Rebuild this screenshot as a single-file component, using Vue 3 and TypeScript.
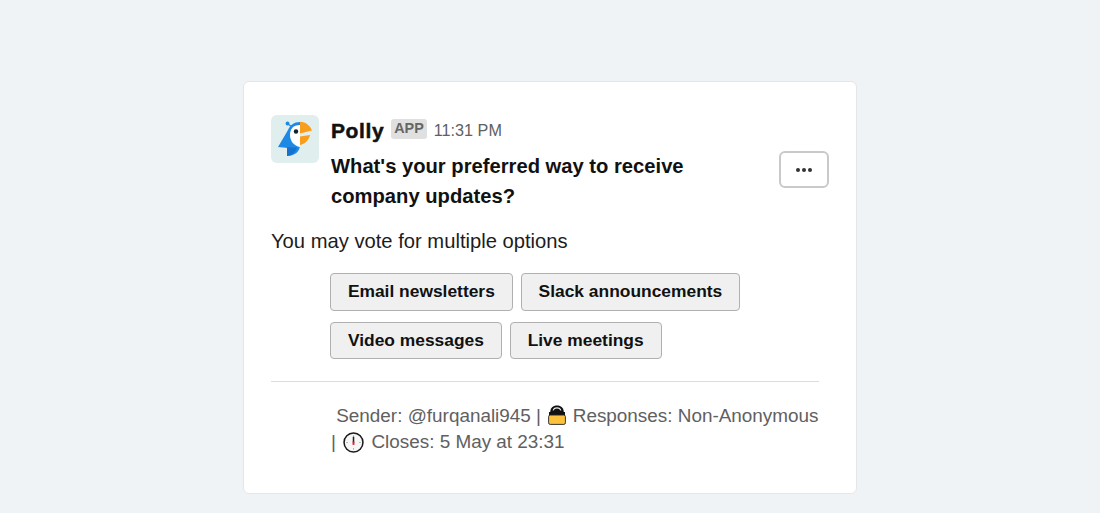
<script setup lang="ts">
const row1 = ['Email newsletters', 'Slack announcements']
const row2 = ['Video messages', 'Live meetings']
</script>

<template>
  <main class="page">
    <section class="card">
      <div class="message">
        <svg class="avatar" viewBox="0 0 48 48" aria-hidden="true">
          <rect width="48" height="48" rx="6" fill="#e1eeee" />
          <circle cx="16.5" cy="8.5" r="1.9" fill="#1e88e5" />
          <path d="M17 9 L21 12" stroke="#1e88e5" stroke-width="1.2" />
          <path d="M29 7 C23 7 19 10 17 15 L7 32 L16 32 L16 41 C23 41 29 37 29 30 Z" fill="#1e88e5" />
          <path d="M7 32 L26 32.5 C24 38 20 41 16 41 L16 33 Z" fill="#1672cc" />
          <path d="M29 10 C22 10 19 14 19 20 C19 26 23 31 29 32 Z" fill="#fff" />
          <circle cx="25" cy="16.5" r="2.2" fill="#10222e" />
          <path d="M29 6.7 C35 7 39 10.5 41 15.5 L29 18.5 Z" fill="#f99d1c" />
          <path d="M29 21.5 L39 20 C38 25 34 29 29 30 Z" fill="#f99d1c" />
        </svg>
        <div class="body">
          <div class="meta">
            <span class="name">Polly</span>
            <span class="badge">APP</span>
            <span class="time">11:31 PM</span>
          </div>
          <div class="question-row">
            <h1 class="question">What's your preferred way to receive company updates?</h1>
            <button class="more" type="button" aria-label="More options">
              <i></i><i></i><i></i>
            </button>
          </div>
        </div>
      </div>
      <p class="hint">You may vote for multiple options</p>
      <div class="options">
        <div class="option-row">
          <button v-for="o in row1" :key="o" class="option" type="button">{{ o }}</button>
        </div>
        <div class="option-row">
          <button v-for="o in row2" :key="o" class="option" type="button">{{ o }}</button>
        </div>
      </div>
      <hr class="rule" />
      <p class="footer">
        &nbsp;Sender: @furqanali945 |
        <svg class="icon lock" viewBox="0 0 18 20" aria-hidden="true">
          <path d="M2.2 11 V7.5 C2.2 2.8 5 .4 9 .4 C13 .4 15.8 2.8 15.8 7.5 V11 Z" fill="#111" />
          <path d="M4.6 5.6 C5 3.4 6.6 2.2 9 2.2 C11.4 2.2 13 3.4 13.4 5.6 L12.4 5.6 C11.8 4.2 10.6 3.5 9 3.5 C7.4 3.5 6.2 4.2 5.6 5.6 Z" fill="#e8e8e8" />
          <rect x="1" y="7" width="16" height="4" fill="#111" />
          <rect x=".6" y="10" width="16.8" height="9.4" rx="1.6" fill="#fcc13d" stroke="#222" stroke-width=".9" />
        </svg>
        <span class="keep">Responses: Non-Anonymous</span>
        |
        <svg class="icon clock" viewBox="0 0 22 22" aria-hidden="true">
          <circle cx="11" cy="11" r="9.9" fill="#f7f7f7" stroke="#1a1a1a" stroke-width="1.6" />
          <path d="M11 3.5 V5 M11 17 V18.5 M3.5 11 H5 M17 11 H18.5" stroke="#888" stroke-width=".8" />
          <path d="M11 11 V5" stroke="#222" stroke-width="1.6" />
          <path d="M11 10 V13.5" stroke="#e0202a" stroke-width="2" />
        </svg>
        Closes: 5 May at 23:31
      </p>
    </section>
  </main>
</template>

<style>
body {
  background: #eff3f6;
}
</style>

<style scoped>
.page {
  min-height: 513px;
  box-sizing: border-box;
  padding-top: 81px;
  display: flex;
  justify-content: center;
  align-items: flex-start;
  font-family: "Liberation Sans", Arial, sans-serif;
  color: #1d1c1d;
}
.card {
  width: 614px;
  height: 413px;
  box-sizing: border-box;
  background: #fff;
  border: 1px solid #e3e7ea;
  border-radius: 6px;
  padding: 33px 27px 0 27px;
}
.message {
  display: flex;
  gap: 12px;
}
.avatar {
  width: 48px;
  height: 48px;
  flex: none;
}
.body {
  flex: 1;
  min-width: 0;
}
.meta {
  display: flex;
  align-items: center;
  height: 30px;
}
.name {
  font-size: 21px;
  font-weight: 700;
  letter-spacing: 0.6px;
  color: #111;
  -webkit-text-stroke: 0.5px #111;
  position: relative;
  top: 1px;
}
.badge {
  margin-left: 7px;
  height: 20px;
  line-height: 18px;
  padding: 0 3px;
  background: #e0e0e0;
  color: #666;
  border-radius: 3px;
  font-size: 14.4px;
  font-weight: 700;
  margin-top: -3px;
}
.time {
  margin-left: 7px;
  font-size: 16.2px;
  color: #616061;
}
.question-row {
  display: flex;
  align-items: flex-start;
  justify-content: space-between;
  margin-top: 6px;
}
.question {
  margin: 0;
  width: 400px;
  font-size: 20.2px;
  line-height: 30px;
  font-weight: 700;
  color: #111;
}
.more {
  width: 50px;
  height: 37px;
  background: #fff;
  border: 2px solid #c9c9c9;
  border-radius: 6px;
  display: flex;
  gap: 2px;
  align-items: center;
  justify-content: center;
  padding: 0;
}
.more i {
  width: 4px;
  height: 4px;
  border-radius: 50%;
  background: #333;
}
.hint {
  margin: 15px 0 0;
  font-size: 20.2px;
  line-height: 30px;
  color: #1d1c1d;
}
.options {
  margin: 17px 0 0 59px;
  display: flex;
  flex-direction: column;
  gap: 11px;
}
.option-row {
  display: flex;
  gap: 8px;
}
.option {
  height: 37.5px;
  padding: 0 16.9px;
  background: #f0f0f0;
  border: 1px solid #b0b0b0;
  border-radius: 4px;
  font-family: inherit;
  font-size: 17.4px;
  font-weight: 700;
  color: #111;
}
.rule {
  margin: 22px 10px 0 0;
  border: 0;
  border-top: 1px solid #dddddd;
}
.footer {
  margin: 21px 10px 0 60px;
  font-size: 18.9px;
  line-height: 26px;
  color: #616061;
}
.keep {
  white-space: nowrap;
}
.icon {
  vertical-align: -3px;
  margin-left: 2px;
  margin-right: 6.5px;
}
.lock {
  width: 18px;
  height: 20px;
}
.clock {
  width: 21px;
  height: 21px;
  margin-right: 2px;
  vertical-align: -5px;
}
</style>
